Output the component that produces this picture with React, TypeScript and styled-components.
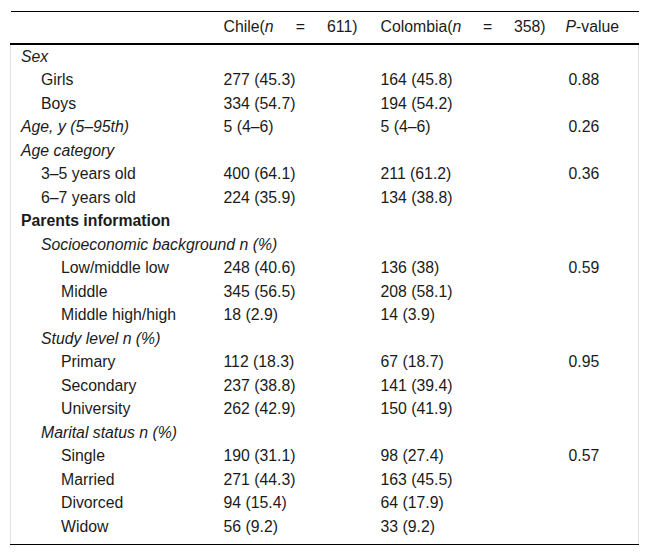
import React from 'react'
import styled, { createGlobalStyle } from 'styled-components'

const GlobalStyle = createGlobalStyle`
  html, body {
    margin: 0;
    padding: 0;
    background: #ffffff;
  }
  body {
    font-family: "Liberation Sans", Arial, Helvetica, sans-serif;
    color: #1b1b1b;
  }
`

const Page = styled.div`
  padding: 11px 10px 0 10px;
`

const Table = styled.table`
  width: 628px;
  border-collapse: collapse;
  table-layout: fixed;
  font-size: 15.8px;
  line-height: 18px;
`

const HeadRow = styled.tr`
  border-top: 1px solid #000;
  border-bottom: 2px solid #000;
`

const HeadCell = styled.th<{ $justify?: boolean }>`
  font-weight: 400;
  text-align: ${({ $justify }) => ($justify ? 'justify' : 'left')};
  text-align-last: ${({ $justify }) => ($justify ? 'justify' : 'auto')};
  padding: ${({ $justify }) => ($justify ? '6px 13px 7px 10px' : '6px 10px 7px 7px')};
  height: 18px;
  white-space: nowrap;
`

const Body = styled.tbody`
  border-left: 1px solid #e3e3e3;
  border-right: 1px solid #e3e3e3;
  border-bottom: 1px solid #000;
`

const Row = styled.tr<{ $last?: boolean }>`
  td {
    padding-bottom: ${({ $last }) => ($last ? '8px' : '2.75px')};
  }
`

const LabelCell = styled.td<{ $level: number; $kind: 'plain' | 'italic' | 'bold' }>`
  padding: 2.75px 6px 2.75px ${({ $level }) => 10 + $level * 20}px;
  font-style: ${({ $kind }) => ($kind === 'italic' ? 'italic' : 'normal')};
  font-weight: ${({ $kind }) => ($kind === 'bold' ? 700 : 400)};
  white-space: nowrap;
  overflow: visible;
`

const ValueCell = styled.td`
  padding: 2.75px 10px;
  white-space: nowrap;
`

const Em = styled.i`
  font-style: italic;
`

type RowData = {
  label: string
  level: number
  kind: 'plain' | 'italic' | 'bold'
  chile?: string
  colombia?: string
  p?: string
}

const rows: RowData[] = [
  { label: 'Sex', level: 0, kind: 'italic' },
  { label: 'Girls', level: 1, kind: 'plain', chile: '277 (45.3)', colombia: '164 (45.8)', p: '0.88' },
  { label: 'Boys', level: 1, kind: 'plain', chile: '334 (54.7)', colombia: '194 (54.2)' },
  { label: 'Age, y (5–95th)', level: 0, kind: 'italic', chile: '5 (4–6)', colombia: '5 (4–6)', p: '0.26' },
  { label: 'Age category', level: 0, kind: 'italic' },
  { label: '3–5 years old', level: 1, kind: 'plain', chile: '400 (64.1)', colombia: '211 (61.2)', p: '0.36' },
  { label: '6–7 years old', level: 1, kind: 'plain', chile: '224 (35.9)', colombia: '134 (38.8)' },
  { label: 'Parents information', level: 0, kind: 'bold' },
  { label: 'Socioeconomic background n (%)', level: 1, kind: 'italic' },
  { label: 'Low/middle low', level: 2, kind: 'plain', chile: '248 (40.6)', colombia: '136 (38)', p: '0.59' },
  { label: 'Middle', level: 2, kind: 'plain', chile: '345 (56.5)', colombia: '208 (58.1)' },
  { label: 'Middle high/high', level: 2, kind: 'plain', chile: '18 (2.9)', colombia: '14 (3.9)' },
  { label: 'Study level n (%)', level: 1, kind: 'italic' },
  { label: 'Primary', level: 2, kind: 'plain', chile: '112 (18.3)', colombia: '67 (18.7)', p: '0.95' },
  { label: 'Secondary', level: 2, kind: 'plain', chile: '237 (38.8)', colombia: '141 (39.4)' },
  { label: 'University', level: 2, kind: 'plain', chile: '262 (42.9)', colombia: '150 (41.9)' },
  { label: 'Marital status n (%)', level: 1, kind: 'italic' },
  { label: 'Single', level: 2, kind: 'plain', chile: '190 (31.1)', colombia: '98 (27.4)', p: '0.57' },
  { label: 'Married', level: 2, kind: 'plain', chile: '271 (44.3)', colombia: '163 (45.5)' },
  { label: 'Divorced', level: 2, kind: 'plain', chile: '94 (15.4)', colombia: '64 (17.9)' },
  { label: 'Widow', level: 2, kind: 'plain', chile: '56 (9.2)', colombia: '33 (9.2)' }
]

export default function App() {
  return (
    <Page>
      <GlobalStyle />
      <Table>
        <colgroup>
          <col style={{ width: 203 }} />
          <col style={{ width: 157 }} />
          <col style={{ width: 188 }} />
          <col style={{ width: 80 }} />
        </colgroup>
        <thead>
          <HeadRow>
            <HeadCell />
            <HeadCell $justify>
              Chile(<Em>n</Em> = 611)
            </HeadCell>
            <HeadCell $justify>
              Colombia(<Em>n</Em> = 358)
            </HeadCell>
            <HeadCell>
              <Em>P</Em>-value
            </HeadCell>
          </HeadRow>
        </thead>
        <Body>
          {rows.map((r, i) => (
            <Row key={r.label} $last={i === rows.length - 1}>
              <LabelCell $level={r.level} $kind={r.kind}>
                {r.label}
              </LabelCell>
              <ValueCell>{r.chile}</ValueCell>
              <ValueCell>{r.colombia}</ValueCell>
              <ValueCell>{r.p}</ValueCell>
            </Row>
          ))}
        </Body>
      </Table>
    </Page>
  )
}
